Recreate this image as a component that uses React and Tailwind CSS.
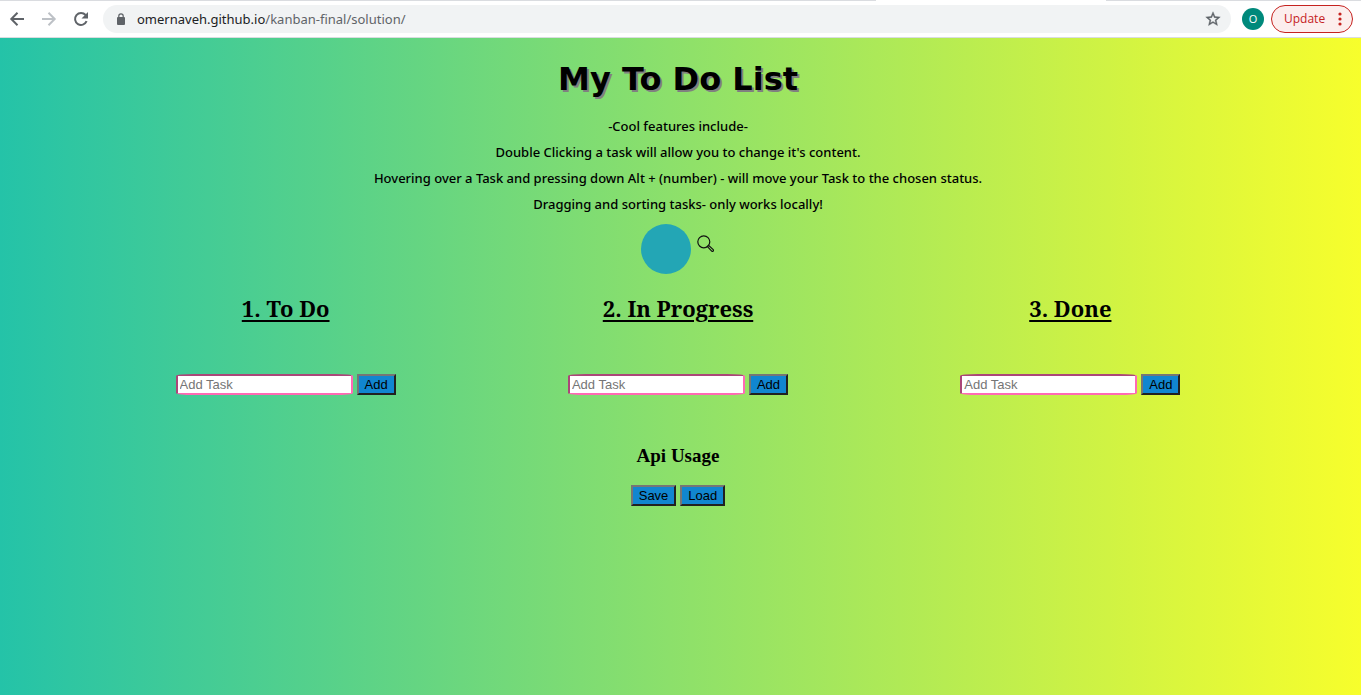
import React from 'react'

const bevel =
  'h-[21px] border-2 border-t-[#767676] border-l-[#767676] border-r-[#212121] border-b-[#212121] bg-[#1186d0] px-1.5 font-["Liberation_Sans",Arial,sans-serif] text-[13px] leading-4 text-black'

function TabEdge() {
  return (
    <div className="flex h-px bg-white">
      <div className="flex-1 bg-[#dadce0]" />
      <div className="w-[230px]" />
      <div className="w-[255px] bg-[#dadce0]" />
    </div>
  )
}

function Toolbar() {
  return (
    <header className="flex h-[37px] items-center border-b border-[#dadce0] bg-white pr-2 pl-[9px] font-['Open_Sans',sans-serif]">
      <button aria-label="Back" className="flex w-4 shrink-0 justify-center text-[#5f6368]">
        <svg viewBox="0 0 16 16" className="size-4 shrink-0" fill="none" stroke="currentColor" strokeWidth="2">
          <path d="M15 8H2.500M8.500 1.800 2.300 8l6.200 6.200" />
        </svg>
      </button>
      <button aria-label="Forward" className="ml-4 flex w-4 shrink-0 justify-center text-[#bdc1c6]">
        <svg viewBox="0 0 16 16" className="size-4 shrink-0" fill="none" stroke="currentColor" strokeWidth="2">
          <path d="M1 8h12.500M7.500 1.800 13.700 8l-6.200 6.200" />
        </svg>
      </button>
      <button aria-label="Reload" className="ml-4 flex w-4 shrink-0 justify-center text-[#5f6368]">
        <svg viewBox="0 0 16 16" className="size-4 shrink-0">
          <path d="M13.600 10.200A6 6 0 1 1 12.600 4" fill="none" stroke="currentColor" strokeWidth="2" />
          <path d="M15 1v6.500H8.500z" fill="currentColor" />
        </svg>
      </button>
      <div className="ml-3.5 flex h-7 flex-1 items-center rounded-full bg-[#f1f3f4] pr-2.5 pl-3">
        <svg viewBox="0 0 10 12" className="h-3 w-3 text-[#5f6368]" fill="currentColor">
          <path d="M1 5a1 1 0 0 1 1-1h6a1 1 0 0 1 1 1v6a1 1 0 0 1-1 1H2a1 1 0 0 1-1-1z" />
          <path d="M2.800 5V3a2.200 2.200 0 0 1 4.400 0v2" fill="none" stroke="currentColor" strokeWidth="1.200" />
        </svg>
        <span className="ml-2.5 font-['Noto_Sans',sans-serif] text-[13px] leading-5 text-[#202124]">
          omernaveh.github.io<span className="text-[#5f6368]">/kanban-final/solution/</span>
        </span>
        <button aria-label="Bookmark this tab" className="ml-auto text-[#5f6368]">
          <svg viewBox="1 1 22 22" className="size-4" fill="currentColor" stroke="currentColor" strokeWidth="0.500">
            <path d="M22 9.240l-7.190-.62L12 2 9.190 8.630 2 9.240l5.460 4.730L5.820 21 12 17.270 18.180 21l-1.630-7.030L22 9.240zM12 15.400l-3.760 2.270 1-4.280-3.320-2.880 4.380-.38L12 6.100l1.710 4.040 4.380.38-3.320 2.880 1 4.280L12 15.400z" />
          </svg>
        </button>
      </div>
      <button className="ml-[11px] flex size-[22px] items-center justify-center rounded-full bg-[#00897b] text-[11px] text-white">O</button>
      <button className="ml-[7px] flex h-7 w-[82px] items-center justify-between rounded-full border border-[#c5221f] bg-[#fceeed] pr-2.5 pl-3 text-xs text-[#c5221f]">
        Update
        <svg viewBox="0 0 4 14" className="h-3.5 w-1" fill="currentColor">
          <circle cx="2" cy="2" r="1.600" />
          <circle cx="2" cy="7" r="1.600" />
          <circle cx="2" cy="12" r="1.600" />
        </svg>
      </button>
    </header>
  )
}

function Column({ title }) {
  return (
    <section className="flex flex-col items-center">
      <h2 className="font-['Noto_Serif','Liberation_Serif',serif] text-[22px] leading-7 font-bold underline decoration-2 underline-offset-3">
        {title}
      </h2>
      <form className="mt-[52px] flex gap-1" onSubmit={(e) => e.preventDefault()}>
        <input
          aria-label={`Add task to ${title}`}
          placeholder="Add Task"
          className="h-[21px] w-[177px] rounded-[10%] border-2 border-[#ff69b4] [border-style:inset] bg-white px-0.5 font-['Liberation_Sans',Arial,sans-serif] text-[13px] leading-4 placeholder:text-[#757575]"
        />
        <button className={bevel}>Add</button>
      </form>
    </section>
  )
}

export default function App() {
  return (
    <div className="flex min-h-screen flex-col">
      <TabEdge />
      <Toolbar />
      <main className="flex-1 bg-linear-to-r/srgb from-[#24c3a8] to-[#f7fe2c] pr-[5px] text-center text-black">
        <h1 className="pt-5 font-['DejaVu_Sans',Verdana,sans-serif] text-[32px] leading-[42px] font-bold [text-shadow:2px_2px_0_gray]">
          My To Do List
        </h1>
        <div className="mt-[13px] font-['Noto_Sans',sans-serif] text-[13px] leading-[26px] font-medium">
          <p>-Cool features include-</p>
          <p>Double Clicking a task will allow you to change it's content.</p>
          <p>Hovering over a Task and pressing down Alt + (number) - will move your Task to the chosen status.</p>
          <p>Dragging and sorting tasks- only works locally!</p>
        </div>
        <div className="mt-[7px] flex justify-center gap-1.5">
          <div className="size-[50px] rounded-full bg-[#23a6b5]" />
          <button aria-label="Search" className="mt-[11px] h-[17px] w-[18px]">
            <svg viewBox="0 0 17 17" className="size-[17px]" fill="none" stroke="#111" strokeWidth="1.200">
              <circle cx="6.800" cy="6.800" r="6" />
              <path d="M10.400 11.600 11.600 10.400 16.200 14.600a1 1 0 0 1-1.500 1.500z" />
            </svg>
          </button>
        </div>
        <div className="mt-5 grid grid-cols-3 px-[6.6%]">
          <Column title="1. To Do" />
          <Column title="2. In Progress" />
          <Column title="3. Done" />
        </div>
        <section className="mt-[50px]">
          <h3 className="font-['Liberation_Serif',serif] text-[19px] leading-[22px] font-bold">Api Usage</h3>
          <div className="mt-[18px] flex justify-center gap-1">
            <button className={bevel}>Save</button>
            <button className={bevel}>Load</button>
          </div>
        </section>
      </main>
    </div>
  )
}
